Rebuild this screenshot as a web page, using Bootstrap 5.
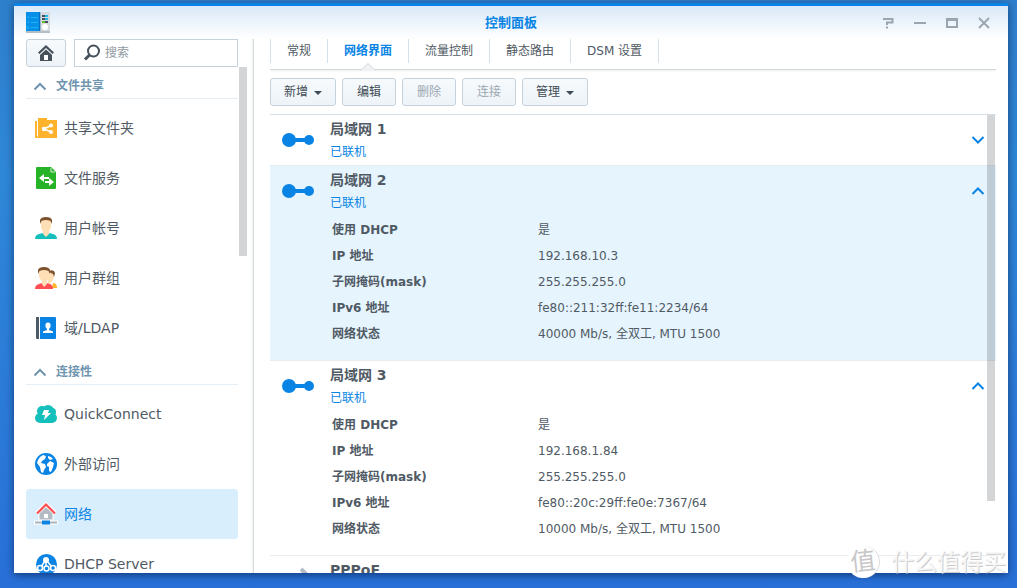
<!DOCTYPE html>
<html lang="zh-CN">
<head>
<meta charset="utf-8">
<meta name="viewport" content="width=device-width, initial-scale=1">
<title>控制面板</title>
<link href="https://cdn.jsdelivr.net/npm/bootstrap@5.3.0/dist/css/bootstrap.min.css" rel="stylesheet">
<style>
  :root { --ink: #505a64; --blue: #0a84e4; --line: #d5e0e9; }
  body {
    font-family: "DejaVu Sans", "Noto Sans CJK SC", sans-serif;
    font-size: 12px; line-height: 16px; color: var(--ink);
    background: linear-gradient(#2e7fcc 0, #2f88d8 30%, #2870d8 100%);
    padding: 3px 9px 15px 14px;
  }
  svg { display: block; flex: none; }
  .win { background: linear-gradient(#d9e9f8, #fff 33px); border-top: 3px solid var(--blue); box-shadow: 0 2px 8px rgba(0, 20, 60, .6); }
  .titlebar { height: 33px; padding: 0 16px 0 12px; }
  .titlebar h1 { font-size: 13px; line-height: 20px; color: var(--blue); }
  .win-tools button { color: #9aa5af; }
  .title-side { width: 118px; }
  .plain { background: none; border: 0; padding: 0; color: inherit; }
  .side { width: 240px; padding-left: 12px; border-right: 1px solid #d9dcdf; box-shadow: inset -2px 0 2px -1px #eceef0; }
  .side-body { width: 212px; }
  .tool-btn {
    height: 28px; border: 1px solid #c5d2dc; border-radius: 3px; padding: 0 14px;
    background: linear-gradient(#f6fafd, #edf3f8); color: #414b55;
  }
  .tool-btn:disabled { color: #9ba7b2; opacity: 1; }
  .menu-btn { padding: 0 13px; }
  .home-btn { width: 40px; padding: 0; }
  .find { height: 28px; border: 1px solid #c5d2dc; padding: 0 8px; background: #fff; }
  .find input { font-size: 12px; line-height: 16px; outline: 0; width: 100%; color: var(--ink); }
  .find input::placeholder { color: #9199a1; }
  .group-head { height: 27px; margin: 5px 0 4px; padding: 2px 8px 0; border-bottom: 1px solid #e5eef5; color: #6f95af; width: 100%; gap: 10px; }
  .side-link { height: 50px; padding: 0 9px; gap: 7px; font-size: 14px; line-height: 20px; color: var(--ink); border-radius: 3px; }
  .side-link.active { background: #d9eefd; color: var(--blue); }
  .thumb { width: 8px; background: rgba(40, 45, 50, .2); z-index: 2; }
  .thumb-side { left: 225px; top: 28px; height: 189px; }
  .thumb-main { right: 1px; top: 1px; height: 386px; }
  .content { padding: 0 12px 0 16px; }
  .tabs { padding-bottom: 6px; border-bottom: 1px solid #d3d6d8; box-shadow: 0 2px 2px -1px #eceeef; }
  .tabs li { border-left: 1px solid var(--line); height: 24px; }
  .tabs li:last-child { border-right: 1px solid var(--line); }
  .tabs a { padding: 4px 16px; color: var(--ink); display: block; }
  .tabs a.active { color: var(--blue); font-weight: 700; }
  .notch { left: 50%; bottom: -7px; margin-left: -7px; }
  .bar { gap: 6px; margin: 8px 0; }
  .caret { border: 4px solid transparent; border-top-color: currentColor; border-bottom: 0; margin-left: 6px; display: inline-block; vertical-align: 1px; }
  .nic { border-top: 1px solid #e6ecef; padding: 4px 10px 0 12px; height: 51px; }
  .nic:first-child { border-top-color: var(--line); }
  .nic.open { height: 195px; }
  .nic.picked { background: #e6f4fe; }
  .nic h2 { font-size: 14px; line-height: 20px; }
  .nic-icon { width: 48px; padding-top: 14px; }
  .state { color: var(--blue); padding-top: 5px; }
  .facts { margin: 6px 0 0 2px; }
  .facts th, .facts td { height: 26px; padding: 0; }
  .facts th { width: 206px; }
  .fold { padding-top: 16px; color: var(--blue); }
  .stamp { right: 11px; bottom: 10px; color: #f7f7f7; font-size: 23px; line-height: 32px; gap: 12px; text-shadow: 1px 1px 0 #ccc; z-index: 3; }
  .stamp-seal { width: 32px; height: 32px; font-size: 25px; color: #c8c8c8; background: #fff; box-shadow: 1px 0 0 #ddd; text-shadow: none; transform: rotate(-6deg); }
</style>
</head>
<body class="vh-100 m-0 overflow-hidden position-relative">
<svg width="0" height="0" class="position-absolute" aria-hidden="true">
  <symbol id="up" viewBox="0 0 14 10"><path d="M1.5 8 7 2.5 12.5 8" fill="none" stroke="currentColor" stroke-width="2"/></symbol>
  <symbol id="down" viewBox="0 0 14 10"><path d="M1.5 2 7 7.5 12.5 2" fill="none" stroke="currentColor" stroke-width="2"/></symbol>
  <symbol id="link" viewBox="0 0 32 14"><g fill="#0a84e4"><circle cx="7" cy="7" r="7"/><circle cx="27" cy="7" r="5"/><path d="M10 5h15v4H10z"/></g></symbol>
</svg>

<div class="win h-100 d-flex flex-column">
  <header class="titlebar d-flex flex-shrink-0 align-items-center justify-content-between">
    <div class="title-side">
      <svg width="24" height="21" viewBox="0 0 24 21"><path d="M0 1h24v20H0z" fill="#b6bec5"/><path d="M0 0h14v19H0z" fill="#0790ea"/><path d="M13 0h1.500v19H13z" fill="#0670c4"/><path d="M14.500 0H24v19h-9.500z" fill="#d6dbdf"/><path d="M5 5.500h7M5 10.500h7M5 15.500h7" stroke="#19b4f2"/><path d="M1 5l1 1 1-2M1 10l1 1 1-2M1 14.500h2v2H1z" stroke="#19b4f2" stroke-width=".7" fill="none"/><path d="M16 3h6v2h-6zM16 6h6v2h-6zM16 9h6v2h-6z" fill="#44535f"/><path d="M19 3h3v2h-3zM19 6h3v2h-3z" fill="#20b8ee"/><path d="M16 9h3v2h-3z" fill="#69be28"/><circle cx="19" cy="15" r="3" fill="#fff"/></svg>
    </div>
    <h1 class="m-0 ps-1 fw-bold">控制面板</h1>
    <div class="win-tools title-side d-flex justify-content-end gap-3">
      <button class="plain" type="button" aria-label="帮助"><svg width="16" height="12" viewBox="0 0 16 12"><path d="M3 2h9.500v3.500H7V8M6 10.500h2" fill="none" stroke="currentColor" stroke-width="2"/></svg></button>
      <button class="plain" type="button" aria-label="最小化"><svg width="16" height="12" viewBox="0 0 16 12"><path d="M2 5h12v2H2z" fill="currentColor"/></svg></button>
      <button class="plain" type="button" aria-label="最大化"><svg width="16" height="12" viewBox="0 0 16 12"><path d="M3 2h10v8H3z" fill="none" stroke="currentColor" stroke-width="2"/><path d="M2 1h12v3H2z" fill="currentColor"/></svg></button>
      <button class="plain" type="button" aria-label="关闭"><svg width="16" height="12" viewBox="0 0 16 12"><path d="M3 1l10 10M13 1 3 11" stroke="currentColor" stroke-width="1.800"/></svg></button>
    </div>
  </header>

  <div class="d-flex flex-grow-1 overflow-hidden">
    <aside class="side flex-shrink-0 position-relative overflow-hidden">
      <div class="side-body">
        <div class="d-flex gap-2">
          <button class="tool-btn home-btn d-flex align-items-center justify-content-center flex-shrink-0" type="button" aria-label="主页">
            <svg width="16" height="17" viewBox="0 0 16 17" fill="#47515b"><path d="M8 0 16 7.500 14.500 9 8 3 1.500 9 0 7.500z"/><path d="M8 4.500 14 10v6H2v-6z"/><path d="M6 10h4v5H6z" fill="#fff"/></svg>
          </button>
          <label class="find d-flex align-items-center flex-grow-1 gap-1">
            <svg width="18" height="18" viewBox="0 0 18 18"><circle cx="10.500" cy="7" r="5.500" fill="none" stroke="#47515b" stroke-width="2"/><path d="M6.500 11 2 15.500" stroke="#47515b" stroke-width="3"/></svg>
            <input class="plain" type="text" placeholder="搜索" aria-label="搜索">
          </label>
        </div>

        <button class="plain group-head d-flex align-items-center fw-bold" type="button"><svg width="12" height="10" viewBox="0 0 12 10"><path d="M.5 8.500 6 3l5.500 5.500" fill="none" stroke="currentColor" stroke-width="2"/></svg>文件共享</button>
        <nav>
          <a class="side-link d-flex align-items-center text-decoration-none" href="#"><svg width="22" height="22" viewBox="0 0 22 22"><path d="M3 1h9v2h10v18H3z" fill="#ffb32c"/><path d="M0 4h2v15.500h1V21H0z" fill="#ffb32c"/><path d="M16 8.500 9 12l7 3" fill="none" stroke="#fff" stroke-width="1.500"/><g fill="#fff"><circle cx="9" cy="12" r="2.200"/><circle cx="16" cy="8.500" r="2"/><circle cx="16" cy="15" r="2"/></g></svg>共享文件夹</a>
          <a class="side-link d-flex align-items-center text-decoration-none" href="#"><svg width="22" height="22" viewBox="0 0 22 22"><path d="M1 1q0-1 1-1h14l5 5v16q0 1-1 1H2q-1 0-1-1z" fill="#27b327"/><path d="M16 1v4h4" fill="none" stroke="#fff" stroke-width=".8"/><path d="M4 11l5-4v3h5v2H9v3zM19 15l-5-4v3h-4v2h4v3z" fill="#fff"/></svg>文件服务</a>
          <a class="side-link d-flex align-items-center text-decoration-none" href="#"><svg width="22" height="22" viewBox="0 0 22 22"><path d="M0 22q0-4 4-5l4-1 3 3 3-3 4 1q4 1 4 5z" fill="#14bfbc"/><path d="M6 4q5-4 10 0v6q-1 3-2 4v3l-3 3-3-3v-3q-2-2-2-4z" fill="#ffdfb5"/><path d="M5 7V3q1-3 6-3t6 3v4l-1.500-3Q11 2 6.500 4z" fill="#7d512e"/></svg>用户帐号</a>
          <a class="side-link d-flex align-items-center text-decoration-none" href="#"><svg width="22" height="22" viewBox="0 0 22 22"><path d="M18 16q4 0 4 5h-5z" fill="#ffb32c"/><path d="M13 6q5-2 6 1-0 6-3 9l-3 1z" fill="#ffdfb5"/><path d="M14 4q5-2 6 2l-1 4-1-3-4-2z" fill="#7d512e"/><path d="M0 22q0-4 4-5l3-1 2 3 3-3 3 1q3 1 3 5z" fill="#ff4f52"/><path d="M4 4q5-4 10 0v6q-1 3-2 4v3l-3 3-2-3v-3q-2-2-3-4z" fill="#ffdfb5"/><path d="M3 7V3q1-3 6-3t6 3v4l-1.500-3Q9 2 4.500 4z" fill="#7d512e"/></svg>用户群组</a>
          <a class="side-link d-flex align-items-center text-decoration-none" href="#"><svg width="22" height="22" viewBox="0 0 22 22"><path d="M1 0h3v22H2q-1 0-1-1z" fill="#4b5a66"/><path d="M5 0h15q1 0 1 1v20q0 1-1 1H5z" fill="#0a84e4"/><path d="M10.500 7.500q0-2 2.500-2t2.500 2v2.500l-1.500 2v1l4 1.500V16H8v-1.500l4-1.500v-1l-1.500-2z" fill="#fff"/></svg>域/LDAP</a>
        </nav>

        <button class="plain group-head d-flex align-items-center fw-bold" type="button"><svg width="12" height="10" viewBox="0 0 12 10"><path d="M.5 8.500 6 3l5.500 5.500" fill="none" stroke="currentColor" stroke-width="2"/></svg>连接性</button>
        <nav>
          <a class="side-link d-flex align-items-center text-decoration-none" href="#"><svg width="22" height="22" viewBox="0 0 22 22"><g fill="#14bfbc"><circle cx="5" cy="15" r="5"/><circle cx="17" cy="15" r="5"/><circle cx="7" cy="8" r="5"/><circle cx="13" cy="8" r="6"/><circle cx="17" cy="9" r="4"/><path d="M5 10h12v10H5z"/></g><path d="M9 7h5l-1 3h3l-7 7 1-5H7z" fill="#fff"/></svg>QuickConnect</a>
          <a class="side-link d-flex align-items-center text-decoration-none" href="#"><svg width="22" height="22" viewBox="0 0 22 22"><circle cx="11" cy="11" r="11" fill="#0a84e4"/><path d="M5 4l3-2 3 1-1 3-3 2-1 2 4 1 1 3-2 3-1 3-2-1-1-5-3-4 1-3zM13 3l3 1 2 2-3 1-2-2zM12 11l3-3 4 2-1 4-2 5-2-1v-4l-2-1z" fill="#fff"/></svg>外部访问</a>
          <a class="side-link active d-flex align-items-center text-decoration-none" href="#" aria-current="page"><svg width="22" height="22" viewBox="0 0 22 22" overflow="visible"><path d="M11 3l7 7v7H4v-7z" fill="#b3bcc4" stroke="#fff"/><path d="M9 11h4v4H9z" fill="#fff"/><path d="M1.500 10.500 11 1.500l9.500 9" fill="none" stroke="#fff" stroke-width="4"/><path d="M2 10.500 11 1.500l9 9" fill="none" stroke="#fb4e51" stroke-width="2.200"/><path d="M-1 17.500h24v4H-1z" fill="#fff"/><path d="M0 18.500h22v2H0z" fill="#aab4bd"/><path d="M7 17.500h8v4H7z" fill="#0a84e4"/></svg>网络</a>
          <a class="side-link d-flex align-items-center text-decoration-none" href="#"><svg width="22" height="22" viewBox="0 0 22 22"><circle cx="11.500" cy="11.500" r="10.500" fill="#0a84e4"/><path d="M11 8v7M10 8l-4 6M12 8l5 6" stroke="#fff" stroke-width="1.500"/><circle cx="11" cy="7" r="3" fill="#fff"/><g fill="#0a84e4" stroke="#fff" stroke-width="1.500"><circle cx="5" cy="15" r="2.500"/><circle cx="11.500" cy="15.500" r="2.500"/><circle cx="18" cy="15" r="2.500"/></g></svg>DHCP Server</a>
        </nav>
      </div>
      <div class="thumb thumb-side position-absolute"></div>
    </aside>

    <main class="content flex-grow-1 d-flex flex-column overflow-hidden">
      <ul class="tabs list-unstyled d-flex m-0 flex-shrink-0">
        <li><a class="text-decoration-none" href="#">常规</a></li>
        <li class="position-relative"><a class="active text-decoration-none" href="#" aria-current="page">网络界面</a>
          <svg class="notch position-absolute" width="14" height="7" viewBox="0 0 14 7"><path d="M0 7 7 0l7 7z" fill="#f2f3f4"/><path d="M0 6.500h1L7 .5l6 6h1" fill="none" stroke="#d3d6d8"/></svg></li>
        <li><a class="text-decoration-none" href="#">流量控制</a></li>
        <li><a class="text-decoration-none" href="#">静态路由</a></li>
        <li><a class="text-decoration-none" href="#">DSM 设置</a></li>
      </ul>

      <div class="bar d-flex flex-shrink-0">
        <button class="tool-btn menu-btn" type="button">新增<span class="caret"></span></button>
        <button class="tool-btn" type="button">编辑</button>
        <button class="tool-btn" type="button" disabled>删除</button>
        <button class="tool-btn" type="button" disabled>连接</button>
        <button class="tool-btn menu-btn" type="button">管理<span class="caret"></span></button>
      </div>

      <div class="position-relative flex-grow-1 overflow-hidden">
        <div>
          <section class="nic d-flex align-items-start">
            <div class="nic-icon"><svg width="32" height="14"><use href="#link"/></svg></div>
            <div class="flex-grow-1"><h2 class="m-0 fw-bold">局域网 1</h2><div class="state">已联机</div></div>
            <button class="plain fold" type="button" aria-label="展开"><svg width="16" height="10" viewBox="-1 0 16 10"><use href="#down" width="14" height="10"/></svg></button>
          </section>
          <section class="nic open picked d-flex align-items-start">
            <div class="nic-icon"><svg width="32" height="14"><use href="#link"/></svg></div>
            <div class="flex-grow-1"><h2 class="m-0 fw-bold">局域网 2</h2><div class="state">已联机</div>
              <table class="facts">
                <tr><th scope="row">使用 DHCP</th><td>是</td></tr>
                <tr><th scope="row">IP 地址</th><td>192.168.10.3</td></tr>
                <tr><th scope="row">子网掩码(mask)</th><td>255.255.255.0</td></tr>
                <tr><th scope="row">IPv6 地址</th><td>fe80::211:32ff:fe11:2234/64</td></tr>
                <tr><th scope="row">网络状态</th><td>40000 Mb/s, 全双工, MTU 1500</td></tr>
              </table>
            </div>
            <button class="plain fold" type="button" aria-label="收起"><svg width="16" height="10" viewBox="-1 0 16 10"><use href="#up" width="14" height="10"/></svg></button>
          </section>
          <section class="nic open d-flex align-items-start">
            <div class="nic-icon"><svg width="32" height="14"><use href="#link"/></svg></div>
            <div class="flex-grow-1"><h2 class="m-0 fw-bold">局域网 3</h2><div class="state">已联机</div>
              <table class="facts">
                <tr><th scope="row">使用 DHCP</th><td>是</td></tr>
                <tr><th scope="row">IP 地址</th><td>192.168.1.84</td></tr>
                <tr><th scope="row">子网掩码(mask)</th><td>255.255.255.0</td></tr>
                <tr><th scope="row">IPv6 地址</th><td>fe80::20c:29ff:fe0e:7367/64</td></tr>
                <tr><th scope="row">网络状态</th><td>10000 Mb/s, 全双工, MTU 1500</td></tr>
              </table>
            </div>
            <button class="plain fold" type="button" aria-label="收起"><svg width="16" height="10" viewBox="-1 0 16 10"><use href="#up" width="14" height="10"/></svg></button>
          </section>
          <section class="nic d-flex align-items-start">
            <div class="nic-icon"><svg width="32" height="14" viewBox="0 0 32 14" overflow="visible"><path d="M19-5l10 10" stroke="#b3bcc4" stroke-width="4"/><circle cx="7" cy="7" r="6" fill="#b3bcc4"/></svg></div>
            <div class="flex-grow-1"><h2 class="m-0 fw-bold">PPPoE</h2></div>
          </section>
        </div>
        <div class="thumb thumb-main position-absolute"></div>
      </div>
    </main>
  </div>
</div>
<div class="stamp position-absolute d-flex align-items-center" aria-hidden="true"><span class="stamp-seal rounded-circle text-center">值</span>什么值得买</div>
<script src="https://cdn.jsdelivr.net/npm/bootstrap@5.3.0/dist/js/bootstrap.bundle.min.js"></script>
</body>
</html>
